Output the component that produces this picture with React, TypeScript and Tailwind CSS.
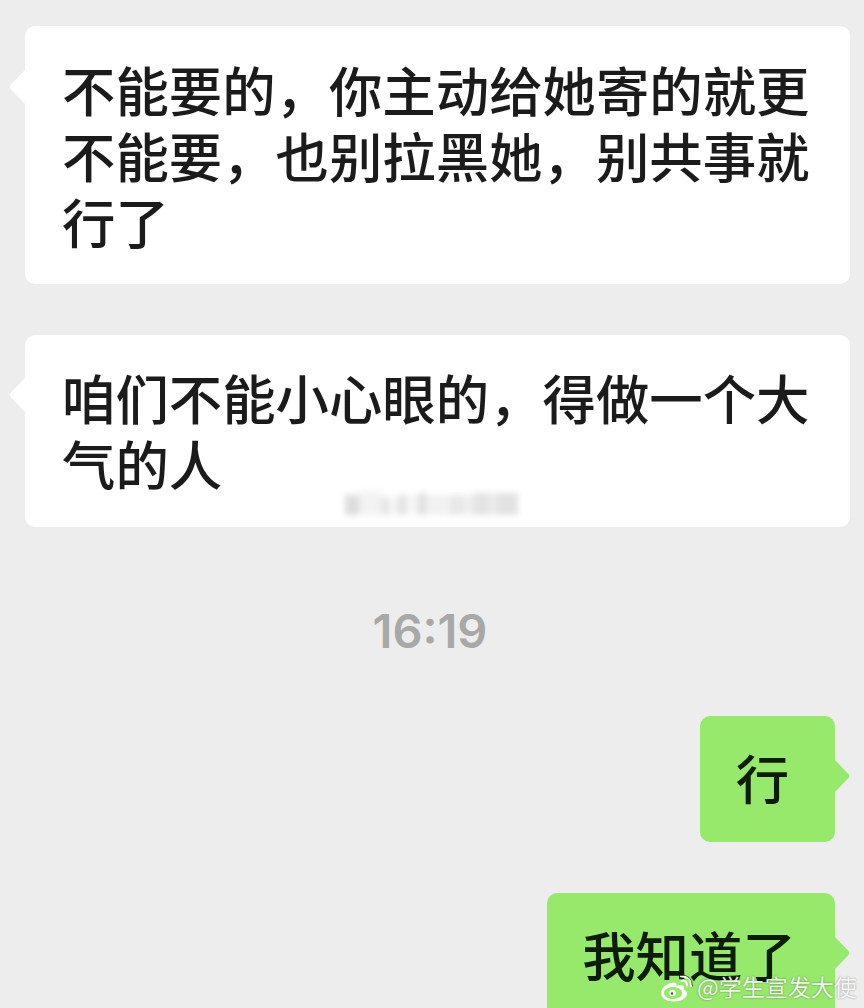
import React from "react";

const cjk = "font-['Noto_Sans_CJK_SC','Noto_Sans',sans-serif]";

function LeftBubble({ lines, tailTop, className, children }: { lines: string[]; tailTop: string; className: string; children?: React.ReactNode }) {
  return (
    <div className={`relative ml-[25px] w-[825px] rounded-[10px] bg-white pl-[37px] ${className}`}>
      <svg className={`absolute left-[-16px] w-[17px] h-[36px] ${tailTop}`} viewBox="0 0 17 36">
        <path d="M17 0 L1.5 16 Q0 18 1.5 20 L17 36 Z" fill="#ffffff" />
      </svg>
      {lines.map((l) => (
        <div key={l} className="h-[66px] whitespace-nowrap text-[53.4px] leading-[66px] font-medium text-[#1b1b1b]">{l}</div>
      ))}
      {children}
    </div>
  );
}

function RightBubble({ text, className }: { text: string; className: string }) {
  return (
    <div className={`relative mr-[29px] rounded-[10px] bg-[#97e96b] text-[#0c1c07] font-medium whitespace-nowrap ${className}`}>
      <svg className="absolute right-[-15px] top-[43px] w-[16px] h-[34px]" viewBox="0 0 16 34">
        <path d="M0 0 L14.5 15 Q16 17 14.5 19 L0 34 Z" fill="#97e96b" />
      </svg>
      {text}
    </div>
  );
}

function Smudge() {
  const bars = [
    "w-[14px] h-[20px] bg-[#dcdcdc]", "w-[22px] h-[24px] bg-[#f3f3f3]", "w-[8px] h-[18px] bg-[#e6e6e6]", "w-[9px] h-[18px] bg-[#f6f6f6]",
    "w-[8px] h-[20px] bg-[#e2e2e2]", "w-[12px] h-[20px] bg-[#f6f6f6]", "w-[8px] h-[22px] bg-[#e0e0e0]", "w-[24px] h-[20px] bg-[#f2f2f2]",
    "w-[13px] h-[20px] bg-[#e8e8e8]", "w-[11px] h-[20px] bg-[#efefef]", "w-[13px] h-[22px] bg-[#e2e2e2]", "w-[11px] h-[22px] bg-[#eaeaea]", "w-[20px] h-[22px] bg-[#e2e2e2]",
  ];
  return (
    <div className="absolute left-[320px] top-[156px] flex items-end blur-[3px]">
      {bars.map((b, i) => <div key={i} className={b} />)}
    </div>
  );
}

export default function App() {
  return (
    <div lang="zh-CN" className={`relative h-[1008px] w-[864px] overflow-hidden bg-[#ededed] ${cjk}`}>
      <div className="flex flex-col pt-[26px]">
        <LeftBubble
          className="h-[258px] pt-[30px]"
          tailTop="top-[43px]"
          lines={["不能要的，你主动给她寄的就更", "不能要，也别拉黑她，别共事就", "行了"]}
        />
        <LeftBubble className="mt-[51px] h-[192px] pt-[29px]" tailTop="top-[42px]" lines={["咱们不能小心眼的，得做一个大", "气的人"]}>
          <Smudge />
        </LeftBubble>
        <div className="mt-[74px] translate-x-[-2px] text-center font-['Inter',sans-serif] text-[47px] leading-[60px] font-semibold text-[#a8a8a8]">16:19</div>
        <div className="mt-[55px] flex flex-col items-end">
          <RightBubble text="行" className="flex h-[126px] w-[135px] items-center justify-center pb-[4px] pr-[10px] text-[53.4px]" />
          <RightBubble text="我知道了" className="mt-[51px] flex h-[130px] w-[288px] items-center justify-center pb-[8px] pr-[4px] text-[53.4px]" />
        </div>
      </div>
      <div className="absolute left-[661px] top-[972px] flex items-center gap-[4px] text-[23px] leading-[32px] text-white/90">
        <svg viewBox="0 0 32 28" className="h-[28px] w-[32px]">
          <path
            fillRule="evenodd"
            d="M13 8.5C5 9 0 15 0 19c0 5 6 8.5 13 8.5s13-3.500 13-8c0-2.500-2-3.500-3.500-4 1-2.500 0-4.500-3-4.500-1.500 0-3 .5-4 1 .5-2-.5-3.500-2.500-3.500zM12 13c-5 0-9 2.500-9 6s4 6 9 6 9-2.500 9-6-4-6-9-6z"
            fill="#ffffff"
          />
          <circle cx="11.500" cy="19" r="3.200" fill="#ffffff" />
          <circle cx="11" cy="19.500" r="1.200" fill="#3c5a2a" />
          <path d="M20 2.500Q30 1.500 30 12M20.500 7Q26 6 26 11.500" fill="none" stroke="#ffffff" strokeWidth="2" strokeLinecap="round" />
          <path d="M19 1Q31 0 31.500 12" fill="none" stroke="#1c2a14" strokeWidth="0.7" strokeLinecap="round" />
        </svg>
        <span className="-translate-y-[2px] [text-shadow:0_0_2px_rgba(0,0,0,0.45)]">@学生宣发大使</span>
      </div>
    </div>
  );
}
